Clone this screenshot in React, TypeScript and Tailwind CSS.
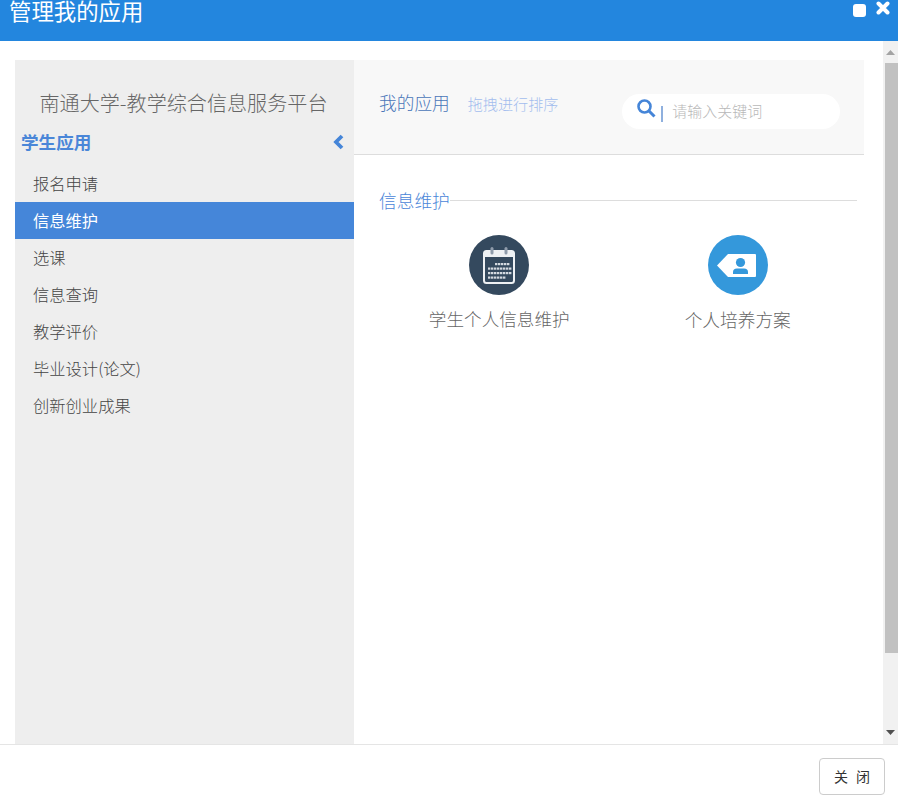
const font = { fontFamily: '"Noto Sans CJK SC", sans-serif' };

function CalendarIcon() {
  const rows = [
    { y: 28, xs: [26, 29, 32, 35, 38] },
    { y: 32.5, xs: [19, 22, 25, 28, 31, 34, 37, 40] },
    { y: 37, xs: [19, 22, 25, 28, 31, 34, 37, 40] },
    { y: 41.5, xs: [19, 22, 25, 28, 31, 34] },
  ];
  return (
    <svg width="60" height="60" viewBox="0 0 60 60">
      <circle cx="30" cy="30" r="30" fill="#34495e" />
      <rect x="15" y="16" width="30" height="32" rx="2.5" fill="none" stroke="#eef1f4" strokeWidth="2" />
      <rect x="15" y="16" width="30" height="6" fill="#eef1f4" />
      <rect x="21.5" y="12" width="3" height="7.5" rx="1.5" fill="#8f9cab" />
      <rect x="35.5" y="12" width="3" height="7.5" rx="1.5" fill="#8f9cab" />
      {rows.map((r) => r.xs.map((x) => <rect key={`${r.y}-${x}`} x={x} y={r.y} width="2.4" height="2.2" fill="#d3d9e0" />))}
    </svg>
  );
}

function TicketIcon() {
  return (
    <svg width="60" height="60" viewBox="0 0 60 60">
      <circle cx="30" cy="30" r="30" fill="#3498db" />
      <path d="M9 30.5 L20 19 L47 19 Q48 19 48 20 L48 41 Q48 42 47 42 L20 42 Z" fill="#fff" />
      <circle cx="32.5" cy="27.5" r="4.6" fill="#3498db" />
      <path d="M25 39 L25 37 Q25 33.5 29 33.5 L36 33.5 Q40 33.5 40 37 L40 39 Z" fill="#3498db" />
    </svg>
  );
}

const items = ["报名申请", "信息维护", "选课", "信息查询", "教学评价", "毕业设计(论文)", "创新创业成果"];

export default function App() {
  return (
    <div className="w-[898px] h-[802px] overflow-hidden bg-white flex flex-col" style={font}>
      <header className="h-[41px] shrink-0 bg-[#2386de] flex justify-between pl-[9px] pr-[8px] text-white">
        <h1 className="-mt-[1px] text-[22.4px] leading-[22px] font-normal">管理我的应用</h1>
        <div className="flex items-start gap-[10px]">
          <span className="mt-[4px] w-[13px] h-[13px] rounded-[3px] bg-white" />
          <svg className="mt-[1px]" width="14" height="14" viewBox="0 0 14 14">
            <path d="M2.5 2.5 L11.5 11.5 M11.5 2.5 L2.5 11.5" stroke="#fff" strokeWidth="4" strokeLinecap="round" />
          </svg>
        </div>
      </header>

      <main className="h-[703px] shrink-0 flex">
        <div className="w-[883px] pt-[19px] pl-[15px] pr-[19px] flex">
          <aside className="w-[339px] shrink-0 bg-[#eeeeee]">
            <h2 className="mt-[30px] pr-[2px] text-center text-[20.1px] leading-[26px] font-light text-[#666666]">南通大学-教学综合信息服务平台</h2>
            <div className="mt-[12px] h-[28px] pl-[6px] pr-[9px] flex items-center justify-between text-[#4a86d8]">
              <span className="text-[17.6px] font-bold leading-[28px]">学生应用</span>
              <svg width="13" height="16" viewBox="0 0 13 16">
                <path d="M10 2 L4 8 L10 14" fill="none" stroke="#4585d8" strokeWidth="3.8" />
              </svg>
            </div>
            <ul className="mt-[9px]">
              {items.map((t, i) => (
                <li
                  key={t}
                  className={
                    i === 1
                      ? "h-[37px] pl-[18px] pb-[1px] flex items-center text-[16.3px] bg-[#4586d9] text-white"
                      : "h-[37px] pl-[18px] pb-[1px] flex items-center text-[16.3px] font-light text-[#444444]"
                  }
                >
                  {t}
                </li>
              ))}
            </ul>
          </aside>

          <section className="flex-1 min-w-0">
            <div className="h-[95px] bg-[#f8f8f8] border-b border-[#dddddd] flex items-start pl-[25px]">
              <span className="mt-[29px] text-[17.7px] leading-[26px] font-light text-[#4a76b8]">我的应用</span>
              <span className="mt-[32px] ml-[18px] text-[15.1px] leading-[22px] font-light text-[#a3bdee]">拖拽进行排序</span>
              <div className="mt-[34px] ml-[64px] w-[218px] h-[35px] rounded-full bg-white flex items-center pl-[15px]">
                <svg className="-mt-[6px]" width="19" height="19" viewBox="0 0 19 19">
                  <circle cx="7.5" cy="7.5" r="6" fill="none" stroke="#4585d8" strokeWidth="2.6" />
                  <path d="M12 12 L17.5 17.5" stroke="#4585d8" strokeWidth="3" />
                </svg>
                <span className="ml-[5px] w-[2px] h-[16px] mt-[4px] bg-[#8fb0de]" />
                <span className="ml-[9px] text-[15px] font-light text-[#b8b8b8]">请输入关键词</span>
              </div>
            </div>
            <div className="pl-[25px] pr-[7px]">
              <div className="mt-[32px] flex items-center">
                <span className="text-[17.7px] leading-[26px] font-light text-[#4a86d8]">信息维护</span>
                <span className="flex-1 h-[1px] bg-[#dddddd]" />
              </div>
              <div className="mt-[22px] pl-[1px] grid grid-cols-2">
                <div className="flex flex-col items-center">
                  <CalendarIcon />
                  <span className="mt-[11px] text-[17.6px] leading-[26px] font-light text-[#666666]">学生个人信息维护</span>
                </div>
                <div className="flex flex-col items-center">
                  <TicketIcon />
                  <span className="mt-[11px] text-[17.7px] leading-[26px] font-light text-[#666666]">个人培养方案</span>
                </div>
              </div>
            </div>
          </section>
        </div>

        <div className="w-[15px] shrink-0 bg-[#f1f1f1] flex flex-col items-end">
          <div className="h-[22px] w-full flex items-center justify-center">
            <svg width="9" height="5" viewBox="0 0 9 5"><path d="M4.5 0 L9 5 L0 5 Z" fill="#a3a3a3" /></svg>
          </div>
          <div className="h-[590px] w-[13px] bg-[#c1c1c1]" />
          <div className="flex-1 w-full flex items-end justify-center pb-[9px]">
            <svg width="9" height="5" viewBox="0 0 9 5"><path d="M0 0 L9 0 L4.5 5 Z" fill="#505050" /></svg>
          </div>
        </div>
      </main>

      <footer className="flex-1 border-t border-[#e5e5e5] flex justify-end items-start pt-[13px] pr-[13px]">
        <button className="w-[66px] h-[37px] bg-white border border-[#cccccc] rounded-[4px] text-[14px] text-[#333333] [word-spacing:5px]">
          关 闭
        </button>
      </footer>
    </div>
  );
}
